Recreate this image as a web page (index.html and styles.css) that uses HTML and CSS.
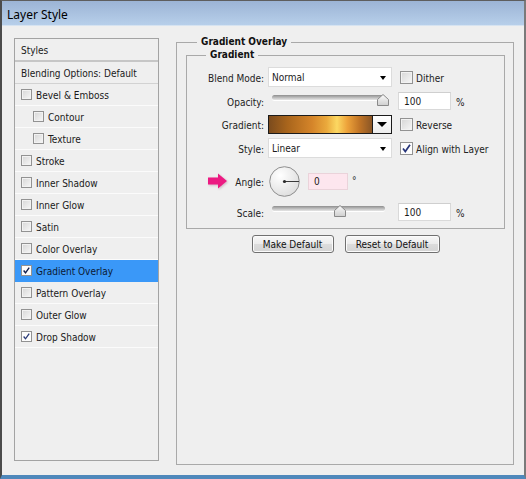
FILE: index.html
```html
<!DOCTYPE html>
<html>
<head>
<meta charset="utf-8">
<title>Layer Style</title>
<link rel="stylesheet" href="styles.css">
</head>
<body>
<div class="window">
  <div class="titlebar">Layer Style</div>
  <div class="content">
    <div class="list">
      <div class="row head">Styles</div>
      <div class="row blend">Blending Options: Default</div>
      <div class="row"><span class="cb"></span>Bevel &amp; Emboss</div>
      <div class="row sub"><span class="cb"></span>Contour</div>
      <div class="row sub"><span class="cb"></span>Texture</div>
      <div class="row"><span class="cb"></span>Stroke</div>
      <div class="row"><span class="cb"></span>Inner Shadow</div>
      <div class="row"><span class="cb"></span>Inner Glow</div>
      <div class="row"><span class="cb"></span>Satin</div>
      <div class="row"><span class="cb"></span>Color Overlay</div>
      <div class="row sel"><span class="cb on"><svg viewBox="0 0 11 11" width="9" height="9"><path d="M2 5.5 L4.3 8.3 L8.8 2" fill="none" stroke="#14204e" stroke-width="1.7"/></svg></span>Gradient Overlay</div>
      <div class="row"><span class="cb"></span>Pattern Overlay</div>
      <div class="row"><span class="cb"></span>Outer Glow</div>
      <div class="row"><span class="cb on"><svg viewBox="0 0 11 11" width="9" height="9"><path d="M2 5.5 L4.3 8.3 L8.8 2" fill="none" stroke="#2a3a78" stroke-width="1.6"/></svg></span>Drop Shadow</div>
    </div>

    <fieldset class="outer">
      <legend>Gradient Overlay</legend>
      <fieldset class="inner">
        <legend>Gradient</legend>
        <div class="form">
          <div class="lbl"><span class="t">Blend Mode:</span></div>
          <div class="select"><span>Normal</span><i class="caret"></i></div>
          <div class="extra"><span class="cb big"></span><span class="t">Dither</span></div>

          <div class="lbl"><span class="t">Opacity:</span></div>
          <div class="slider"><div class="track"></div><svg class="thumb" style="left:105px" viewBox="0 0 12 12" width="12" height="12"><defs><linearGradient id="tg1" x1="0" y1="0" x2="0" y2="1"><stop offset="0" stop-color="#fbfbfb"/><stop offset="1" stop-color="#cfcfcf"/></linearGradient></defs><polygon points="6,0.5 11.5,5.5 11.5,11.5 0.5,11.5 0.5,5.5" fill="url(#tg1)" stroke="#8a8a8a"/></svg></div>
          <div class="extra"><div class="num">100</div><span class="unit t">%</span></div>

          <div class="lbl"><span class="t">Gradient:</span></div>
          <div class="swatch"><div class="grad"></div><div class="gbtn"><i class="caret big"></i></div></div>
          <div class="extra"><span class="cb big"></span><span class="t">Reverse</span></div>

          <div class="lbl"><span class="t">Style:</span></div>
          <div class="select"><span>Linear</span><i class="caret"></i></div>
          <div class="extra"><span class="cb big on"><svg viewBox="0 0 11 11" width="11" height="11"><path d="M2 5.5 L4.3 8.6 L9 1.8" fill="none" stroke="#27357a" stroke-width="1.7"/></svg></span><span class="t">Align with Layer</span></div>

          <div class="lbl"><svg class="arrow" viewBox="0 0 20 16" width="20" height="16"><polygon points="0,4.5 10,4.5 10,0.5 19,8 10,15.5 10,11.5 0,11.5" fill="#ec1a82"/></svg><span class="t">Angle:</span></div>
          <div class="angle">
            <svg class="dial" viewBox="0 0 31 31" width="31" height="31"><defs><radialGradient id="dg" cx="0.35" cy="0.3" r="0.8"><stop offset="0" stop-color="#ffffff"/><stop offset="1" stop-color="#dcdcdc"/></radialGradient></defs><circle cx="15.5" cy="15.5" r="14.8" fill="url(#dg)" stroke="#8e8e8e"/><line x1="15.5" y1="15.5" x2="30" y2="15.5" stroke="#3a3a3a" stroke-width="1"/><circle cx="15.5" cy="15.5" r="1.6" fill="#2a2a2a"/></svg>
            <div class="num pink">0</div><span class="deg">°</span>
          </div>
          <div class="extra"></div>

          <div class="lbl"><span class="t">Scale:</span></div>
          <div class="slider"><div class="track"></div><svg class="thumb" style="left:62px" viewBox="0 0 12 12" width="12" height="12"><defs><linearGradient id="tg2" x1="0" y1="0" x2="0" y2="1"><stop offset="0" stop-color="#fbfbfb"/><stop offset="1" stop-color="#cfcfcf"/></linearGradient></defs><polygon points="6,0.5 11.5,5.5 11.5,11.5 0.5,11.5 0.5,5.5" fill="url(#tg2)" stroke="#8a8a8a"/></svg></div>
          <div class="extra"><div class="num">100</div><span class="unit t">%</span></div>
        </div>
      </fieldset>
      <div class="buttons">
        <button class="btn w1">Make Default</button>
        <button class="btn w2">Reset to Default</button>
      </div>
    </fieldset>
  </div>
</div>
</body>
</html>
```

FILE: styles.css
```css
* { box-sizing: border-box; }
html, body { margin: 0; padding: 0; }
body {
  width: 526px;
  height: 479px;
  overflow: hidden;
  background: #efefef;
  font-family: "DejaVu Sans Condensed", "DejaVu Sans", sans-serif;
  font-size: 10px;
  color: #1e1e1e;
}
.window {
  width: 526px;
  height: 479px;
  display: flex;
  flex-direction: column;
  border-top: 1px solid #5e5e5e;
  border-left: 2px solid #4c4c4c;
  border-right: 2px solid #7a7a7a;
  border-bottom: 4px solid #4f88bb;
  background: #efefef;
}
.titlebar {
  height: 25px;
  flex: none;
  padding: 3px 0 0 5px;
  line-height: 22px;
  background: linear-gradient(#9cb4d5, #b7cfea);
  border-bottom: 1px solid #d6e3f1;
  font-family: "Noto Sans", sans-serif;
  font-size: 12px;
  color: #000;
}
.content {
  flex: 1;
  display: flex;
  align-items: flex-start;
  padding: 10px 0 0 12px;
}
.list {
  width: 145px;
  height: 423px;
  margin-top: 2px;
  border: 1px solid #a3a3a3;
  background: #efefef;
  flex: none;
}
.row {
  height: 22px;
  display: flex;
  align-items: center;
  padding: 2px 0 0 6px;
  border-bottom: 1px solid #fbfbfb;
  white-space: nowrap;
  color: #1a1a1a;
}
.row .cb { margin-top: -2px; }
.row.head { height: 23px; border-bottom: 2px solid #c6c6c6; }
.row.blend { border-bottom: 1px solid #d2d2d2; }
.row.sub { padding-left: 18px; }
.row.sel { background: #3a98f8; border-bottom-color: #3a98f8; color: #0c1a33; }
.cb {
  width: 11px;
  height: 11px;
  flex: none;
  margin-right: 4px;
  border: 1px solid #929292;
  background: linear-gradient(135deg, #d6d6d6, #f7f7f7);
  box-shadow: inset 0 0 0 1px #f2f2f2;
  display: flex;
  align-items: center;
  justify-content: center;
}
.cb.on { background: #fdfdfd; box-shadow: none; }
.cb.big { width: 13px; height: 13px; margin-right: 3px; }

.outer {
  margin: 0 0 0 17px;
  width: 338px;
  height: 429px;
  border: 1px solid #a9a9a9;
  padding: 0 8px 0 9px;
  min-width: 0;
}
.outer > legend {
  margin-left: 11px;
  padding: 0 4px;
  line-height: 12px;
  font-weight: bold;
  color: #111;
}
.inner {
  margin: 0;
  border: 1px solid #a9a9a9;
  padding: 3px 0 6px 0;
  min-width: 0;
}
.inner > legend {
  margin-left: 19px;
  padding: 0 4px;
  line-height: 14px;
  font-weight: bold;
  color: #111;
}
.form {
  display: grid;
  grid-template-columns: 77px 124px 1fr;
  grid-template-rows: 24px 24px 23px 24px 42px 20px;
  column-gap: 4px;
  align-items: center;
}
.t { padding-top: 2px; }
.lbl {
  display: flex;
  align-items: center;
  justify-content: flex-end;
  white-space: nowrap;
  color: #222;
}
.arrow { margin-right: 7px; filter: drop-shadow(1px 1px 1px rgba(120,0,60,0.25)); }
.extra {
  display: flex;
  align-items: center;
  padding-left: 4px;
  white-space: nowrap;
  color: #222;
}
.select {
  height: 20px;
  background: #fff;
  border: 1px solid #dcdcdc;
  display: flex;
  align-items: center;
  justify-content: space-between;
  padding: 1px 5px 0 3px;
  color: #1a1a1a;
}
.caret {
  width: 0;
  height: 0;
  border-left: 3.5px solid transparent;
  border-right: 3.5px solid transparent;
  border-top: 4px solid #000;
}
.caret.big {
  border-left-width: 5px;
  border-right-width: 5px;
  border-top-width: 5px;
}
.slider {
  position: relative;
  height: 12px;
  margin-left: 4px;
  width: 113px;
}
.track {
  height: 5px;
  border-radius: 3px;
  background: linear-gradient(#8e8e8e, #c4c4c4 60%, #e6e6e6);
  box-shadow: 0 1px 0 #ffffff;
}
.thumb { position: absolute; top: -1px; }
.num {
  width: 53px;
  height: 18px;
  margin-left: -2px;
  background: #fff;
  border: 1px solid #d9d9d9;
  border-top-color: #cfcfcf;
  padding-left: 5px;
  line-height: 17px;
  color: #1a1a1a;
}
.unit { margin-left: 5px; }
.swatch {
  height: 19px;
  border: 1px solid #1b1b1b;
  display: flex;
}
.grad {
  flex: 1;
  background: linear-gradient(90deg, #7b4b1d 0%, #a9651c 18%, #d5852a 42%, #eaa93c 56%, #fcd862 66%, #eda23a 76%, #c07426 88%, #8a5626 100%);
}
.gbtn {
  width: 19px;
  border-left: 1px solid #1b1b1b;
  background: linear-gradient(#ffffff, #ececec);
  display: flex;
  align-items: center;
  justify-content: center;
}
.angle {
  display: flex;
  align-items: center;
  padding-left: 1px;
}
.num.pink {
  width: 40px;
  height: 17px;
  margin-left: 8px;
  background: #fde6ee;
  border-color: #ead3da;
  line-height: 16px;
}
.deg { margin-left: 4px; align-self: flex-start; margin-top: 9px; font-size: 10px; }
.buttons {
  display: flex;
  justify-content: center;
  gap: 11px;
  margin-top: 6px;
}
.btn {
  height: 18px;
  padding: 1px 0 0;
  border: 1px solid #707070;
  border-radius: 3px;
  background: linear-gradient(#f7f7f7, #ebebeb 50%, #dcdcdc 51%, #d4d4d4);
  box-shadow: inset 0 0 0 1px #fbfbfb;
  font-family: inherit;
  font-size: 10px;
  color: #111;
}
.btn.w1 { width: 82px; }
.btn.w2 { width: 95px; }
```
